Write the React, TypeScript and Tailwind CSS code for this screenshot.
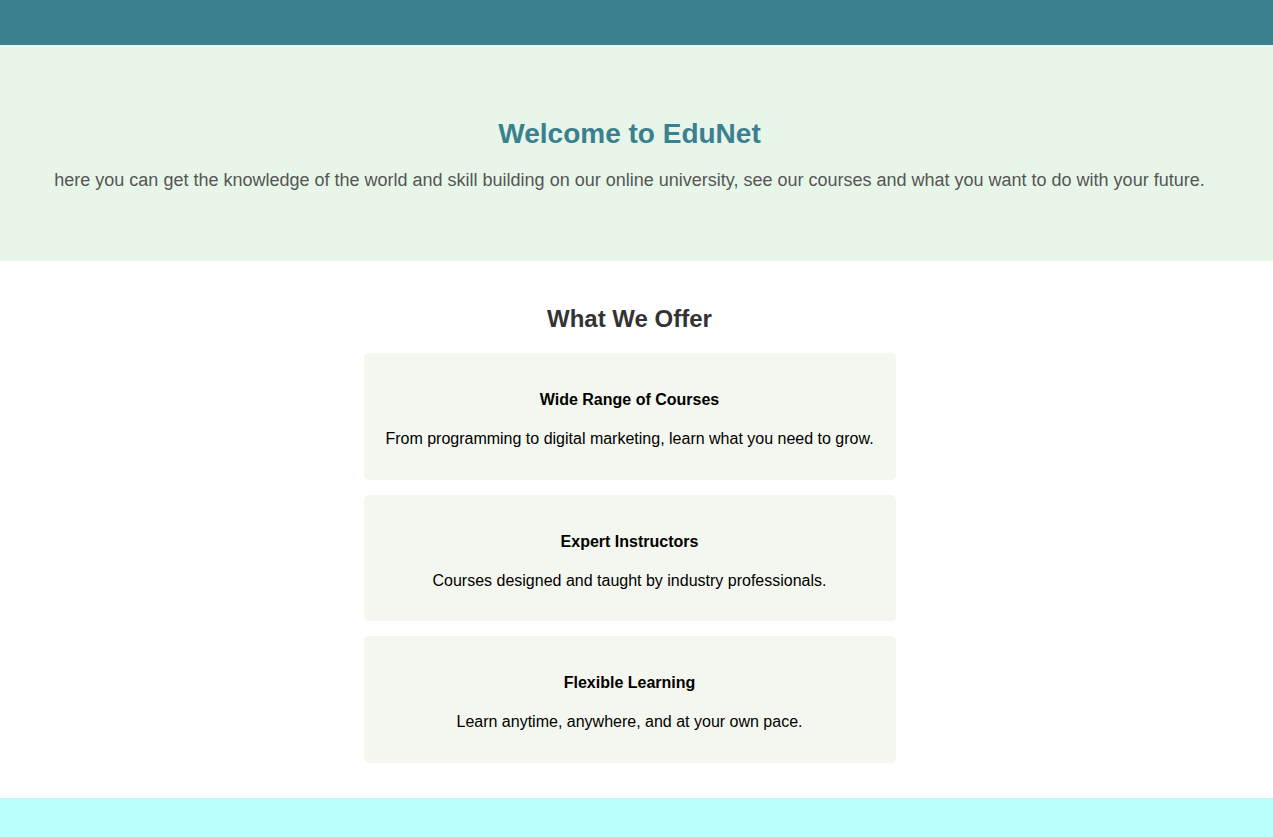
import React from "react";

const cards = [
  { t: "Wide Range of Courses", d: "From programming to digital marketing, learn what you need to grow." },
  { t: "Expert Instructors", d: "Courses designed and taught by industry professionals." },
  { t: "Flexible Learning", d: "Learn anytime, anywhere, and at your own pace." },
];

export default function App() {
  return (
    <div className="min-h-screen bg-white font-['Liberation_Sans',Arial,sans-serif]">
      <header className="h-[45px] bg-[#3a808f]" />
      <section className="bg-[#e8f5e9] pt-[73px] pb-[70px] pr-[14px] text-center">
        <h1 className="text-[28px] leading-[32px] font-bold text-[#3a808f]">Welcome to EduNet</h1>
        <p className="mt-[20px] text-[18px] leading-[21px] text-[#555]">
          here you can get the knowledge of the world and skill building on our online university, see our courses and what you want to do with your future.
        </p>
      </section>
      <section className="pt-[44px] pb-[35px] pr-[14px] flex flex-col items-center">
        <h2 className="text-[24px] leading-[28px] font-bold text-[#333]">What We Offer</h2>
        <div className="mt-[20px] w-[532px] flex flex-col gap-[15px]">
          {cards.map((c) => (
            <div key={c.t} className="bg-[#f4f7ef] rounded-[5px] h-[126.5px] pt-[38px] text-center text-black">
              <h3 className="text-[16px] leading-[18px] font-bold">{c.t}</h3>
              <p className="mt-[21px] text-[16px] leading-[18px]">{c.d}</p>
            </div>
          ))}
        </div>
      </section>
      <footer className="h-[60px] bg-[#b9fffa]" />
    </div>
  );
}
